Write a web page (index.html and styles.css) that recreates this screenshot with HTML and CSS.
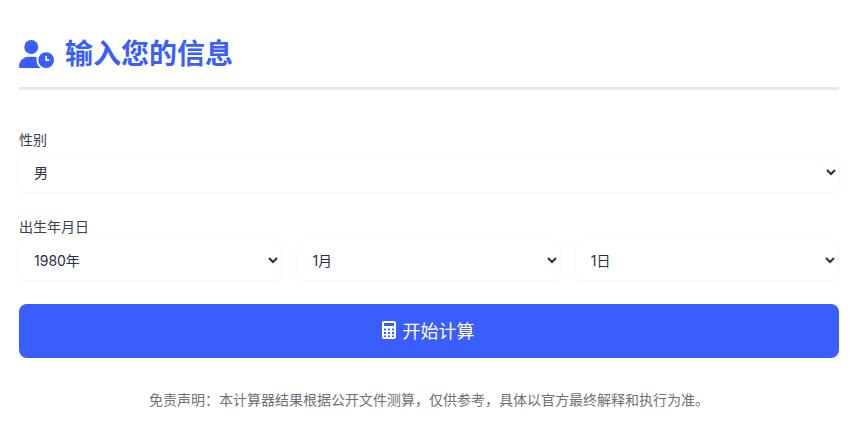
FILE: index.html
```html
<!DOCTYPE html>
<html lang="zh-CN">
<head>
<meta charset="utf-8">
<title>输入您的信息</title>
<link rel="stylesheet" href="styles.css">
</head>
<body>
<main class="card">
  <h2 class="title">
    <svg class="title-icon" viewBox="0 0 640 512" aria-hidden="true"><path d="M224 0a128 128 0 1 1 0 256A128 128 0 1 1 224 0zM178.3 304h91.4c20.6 0 40.4 3.5 58.8 9.9C323 331 320 349.1 320 368c0 59.5 29.5 112.1 74.8 144H29.7C13.3 512 0 498.7 0 482.3C0 383.8 79.8 304 178.3 304zM352 368a144 144 0 1 1 288 0 144 144 0 1 1-288 0zm144-80c-8.8 0-16 7.2-16 16v64c0 8.8 7.2 16 16 16h48c8.8 0 16-7.2 16-16s-7.2-16-16-16H512V304c0-8.800-7.200-16-16-16z"/></svg>
    <span class="title-text">输入您的信息</span>
  </h2>
  <form class="form">
    <div class="field">
      <label class="label" for="gender">性别</label>
      <select class="select" id="gender"><option>男</option><option>女</option></select>
    </div>
    <div class="field">
      <label class="label" for="year">出生年月日</label>
      <div class="date-row">
        <select class="select date-select" id="year"><option>1980年</option></select>
        <select class="select date-select"><option>1月</option></select>
        <select class="select date-select"><option>1日</option></select>
      </div>
    </div>
    <button class="submit" type="button">
      <svg class="calc-icon" viewBox="0 0 14 18" aria-hidden="true">
        <path fill-rule="evenodd" d="M2 0h10a2 2 0 0 1 2 2v14a2 2 0 0 1-2 2H2a2 2 0 0 1-2-2V2a2 2 0 0 1 2-2zM2 2v3h10V2zM2 7.500v2h2v-2zM6 7.500v2h2v-2zM10 7.500v2h2v-2zM2 11v2h2v-2zM6 11v2h2v-2zM10 11v2h2v-2zM2 14.500v1.500h2v-1.500zM6 14.500v1.500h2v-1.500zM10 14.500v1.500h2v-1.500z"/>
      </svg>
      <span>开始计算</span>
    </button>
  </form>
  <p class="note">免责声明：本计算器结果根据公开文件测算，仅供参考，具体以官方最终解释和执行为准。</p>
</main>
</body>
</html>
```
FILE: styles.css
```css
* { box-sizing: border-box; }
html, body { margin: 0; background: #fff; }
body {
  font-family: Inter, "Noto Sans CJK SC", sans-serif;
  color: #2b2d42;
  overflow: hidden;
}
.card { padding: 32px 22px 0 19px; }
.title {
  display: flex;
  align-items: center;
  gap: 11px;
  margin: 0;
  height: 58px;
  padding-bottom: 11px;
  border-bottom: 3px solid #e6e6ec;
  font-size: 28px;
  font-weight: 700;
  line-height: 1.2;
  color: #3a5efc;
}
.title-text { position: relative; top: 1px; }
.title-icon { width: 35px; height: 28px; fill: #3a5efc; flex: none; }
.form { display: flex; flex-direction: column; margin-top: 39px; }
.field { display: flex; flex-direction: column; margin-bottom: 24px; }
.label { font-size: 14px; line-height: 21px; margin-bottom: 3px; color: #3c3e50; }
.select {
  width: 100%;
  height: 39.4px;
  padding: 0 0 0 11px;
  border: 0;
  border-radius: 8px;
  background: #fff;
  box-shadow: 0 1px 4px rgba(0, 0, 0, 0.06);
  font-family: inherit;
  font-size: 14px;
  color: #2b2d42;
}
.date-row { display: flex; gap: 16px; }
.date-select { width: 32%; }
.submit {
  display: flex;
  align-items: center;
  justify-content: center;
  gap: 7px;
  height: 54px;
  padding: 0 2px 2px 0;
  border: 0;
  border-radius: 8px;
  background: #3a5efc;
  color: #fff;
  font-family: inherit;
  font-size: 18px;
}
.calc-icon { width: 14px; height: 18px; fill: #fff; flex: none; }
.note { margin: 31px 0 0; text-align: center; font-size: 14px; line-height: 21px; color: #6e7178; }
```
